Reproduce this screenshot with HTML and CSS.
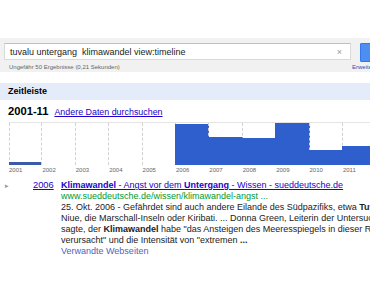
FILE: index.html
```
<!DOCTYPE html>
<html>
<head>
<meta charset="utf-8">
<link rel="stylesheet" href="styles.css">
</head>
<body>
<div class="page">
  <div class="search">
    <div class="search-row">
      <div class="input">
        <span class="query">tuvalu untergang&nbsp; klimawandel view:timeline</span>
        <span class="clear">×</span>
      </div>
      <div class="btn"></div>
    </div>
    <div class="stats-row">
      <span class="stats">Ungefähr 50 Ergebnisse (0,21 Sekunden)</span>
      <span class="adv">Erweiterte Suche</span>
    </div>
  </div>

  <div class="section-head">Zeitleiste</div>

  <div class="range">
    <span class="range-date">2001-11</span>
    <a class="range-link">Andere Daten durchsuchen</a>
  </div>

  <div class="chart">
    <div class="col"><div class="bar bar-dark" style="height:3px"></div></div>
    <div class="col"></div>
    <div class="col"></div>
    <div class="col"></div>
    <div class="col"></div>
    <div class="col"><div class="bar" style="height:41px"></div></div>
    <div class="col"><div class="bar" style="height:28px"></div></div>
    <div class="col"><div class="bar" style="height:27px"></div></div>
    <div class="col"><div class="bar" style="height:42px"></div></div>
    <div class="col"><div class="bar" style="height:15px"></div></div>
    <div class="col"><div class="bar" style="height:19px"></div></div>
    <div class="col"><div class="bar" style="height:30px"></div></div>
  </div>
  <div class="years">
    <span>2001</span><span>2002</span><span>2003</span><span>2004</span><span>2005</span><span>2006</span>
    <span>2007</span><span>2008</span><span>2009</span><span>2010</span><span>2011</span><span>2012</span>
  </div>

  <div class="result">
    <span class="arrow">&#9656;</span>
    <a class="year">2006</a>
    <div class="body">
      <a class="title"><b>Klimawandel</b> - Angst vor dem <b>Untergang</b> - Wissen - sueddeutsche.de</a>
      <div class="url">www.sueddeutsche.de/wissen/klimawandel-angst ...</div>
      <div class="snippet">25. Okt. 2006 - Gefährdet sind auch andere Eilande des Südpazifiks, etwa <b>Tuvalu</b>,<br>Niue, die Marschall-Inseln oder Kiribati. ... Donna Green, Leiterin der Untersuchung,<br>sagte, der <b>Klimawandel</b> habe "das Ansteigen des Meeresspiegels in dieser Region<br>verursacht" und die Intensität von "extremen <b>...</b></div>
      <a class="related">Verwandte Webseiten</a>
    </div>
  </div>
</div>
</body>
</html>
```
FILE: styles.css
```
html, body {
  margin: 0;
  padding: 0;
  background: #fff;
  overflow: hidden;
}
body {
  font-family: "Liberation Sans", Arial, sans-serif;
  color: #222;
}
.page {
  width: 520px;
  padding-top: 38px;
}
.search {
  background: #f1f1f1;
  padding: 5px 0 5px 4px;
  height: 24px;
}
.search-row {
  display: flex;
  align-items: flex-start;
}
.input {
  width: 340px;
  height: 15px;
  background: #fff;
  border: 1px solid #d9d9d9;
  border-top-color: #c0c0c0;
  display: flex;
  align-items: center;
  justify-content: space-between;
  padding-left: 5px;
  box-sizing: content-box;
}
.query {
  font-size: 9px;
  color: #222;
  white-space: nowrap;
}
.clear {
  font-size: 9px;
  color: #999;
  margin-right: 8px;
}
.btn {
  margin-left: 9px;
  width: 40px;
  height: 17px;
  background: #4d8ef0;
  border: 1px solid #3079ed;
  border-radius: 1px;
}
.stats-row {
  display: flex;
  margin-top: 2px;
}
.stats {
  font-size: 6px;
  color: #666;
  margin-left: 5px;
  width: 343px;
}
.adv {
  font-size: 6px;
  color: #2a4fb0;
  white-space: nowrap;
}
.section-head {
  margin-top: 11px;
  background: #e5ecf9;
  height: 17px;
  line-height: 17px;
  padding-left: 8px;
  font-size: 9px;
  font-weight: bold;
  color: #000;
}
.range {
  display: flex;
  align-items: baseline;
  padding-left: 8px;
  height: 22px;
  line-height: 22px;
}
.range-date {
  font-size: 11.2px;
  font-weight: bold;
  color: #000;
}
.range-link {
  margin-left: 6px;
  font-size: 8.9px;
  color: #2200cc;
  text-decoration: underline;
}
.chart {
  margin-left: 9px;
  display: grid;
  grid-template-columns: repeat(12, 33.4px);
  height: 42px;
  border-top: 1px solid #e4e4e4;
}
.col {
  border-left: 1px dashed #d0d0d0;
  display: flex;
  align-items: flex-end;
  margin-left: -1px;
}
.col:first-child {
  margin-left: 0;
}
.bar {
  background: #2f5fcd;
  margin-left: -1px;
  width: calc(100% + 1px);
}
.bar-dark {
  background: #3a5ca8;
}
.years {
  margin-left: 9px;
  display: grid;
  grid-template-columns: repeat(12, 33.4px);
  font-size: 6px;
  color: #666;
  height: 12px;
  line-height: 11px;
}
.result {
  display: flex;
  align-items: flex-start;
  margin-top: 3px;
  font-size: 9px;
  line-height: 11px;
}
.arrow {
  width: 33px;
  padding-left: 5px;
  color: #999;
  font-size: 7px;
  box-sizing: border-box;
}
.year {
  width: 28px;
  color: #2200cc;
  text-decoration: underline;
  font-size: 9.3px;
  box-sizing: border-box;
}
.body {
  white-space: nowrap;
}
.title {
  display: block;
  color: #2200cc;
  text-decoration: underline;
}
.url {
  color: #009933;
}
.snippet {
  color: #222;
}
.related {
  display: block;
  color: #4a66c4;
}
```
